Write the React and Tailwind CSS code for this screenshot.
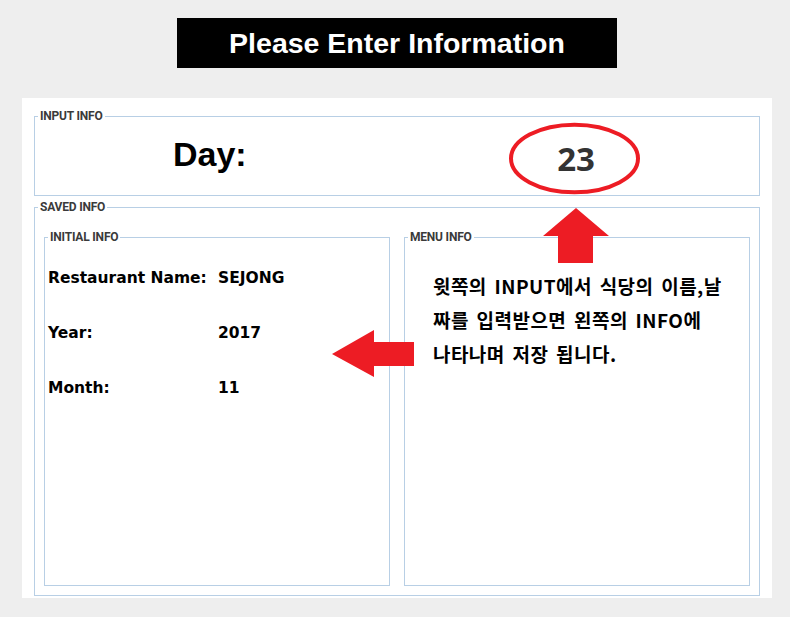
import React from "react";

function Box({ title, className = "", children }) {
  return (
    <fieldset className={`border border-[#b8cfe5] min-w-0 ${className}`}>
      <legend className="ml-[3px] px-[2px] text-[12px] leading-[13px] font-bold tracking-[-0.2px] text-[#3a3a3a] font-['Roboto','Liberation_Sans',Arial,sans-serif]">
        {title}
      </legend>
      {children}
    </fieldset>
  );
}

export default function App() {
  const lbl = "font-['DejaVu_Sans',Verdana,sans-serif] font-bold text-[15.5px] text-black";
  return (
    <div className="relative w-[790px] h-[617px] bg-[#eeeeee] overflow-hidden">
      <div className="pt-[18px] pl-[4px] flex justify-center">
        <div className="w-[440px] h-[50px] bg-black flex items-center justify-center">
          <span className="text-white font-bold text-[28.5px] font-['Liberation_Sans',Arial,sans-serif]">
            Please Enter Information
          </span>
        </div>
      </div>

      <div className="mt-[30px] ml-[22px] w-[750px] h-[500px] bg-white px-[12px] pt-[12px] pb-[2px]">
        <Box title="INPUT INFO">
          <div className="h-[72px] grid grid-cols-2">
            <div className="pl-[138px] pt-[12px]">
              <span className="font-['Liberation_Sans',Arial,sans-serif] font-bold text-[34px] leading-[39px] text-black">
                Day:
              </span>
            </div>
            <div className="pt-[17px] pr-[4px] text-center">
              <span className="font-['Open_Sans',sans-serif] font-bold text-[33px] leading-[37px] text-[#333333]">
                23
              </span>
            </div>
          </div>
        </Box>

        <Box title="SAVED INFO" className="mt-[5px]">
          <div className="flex gap-[14px] px-[9px] pt-[17px] pb-[9px]">
            <Box title="INITIAL INFO" className="flex-1 h-[355px]">
              <div className="pl-[3px] pt-[7px]">
                {[
                  ["Restaurant Name:", "SEJONG"],
                  ["Year:", "2017"],
                  ["Month:", "11"],
                ].map(([k, v]) => (
                  <div key={k} className={`flex h-[55px] leading-[55px] ${lbl}`}>
                    <span className="w-[170px] whitespace-nowrap">{k}</span>
                    <span>{v}</span>
                  </div>
                ))}
              </div>
            </Box>
            <Box title="MENU INFO" className="flex-1 h-[355px]">
              <div className="pl-[28px] pt-[25px] font-['Noto_Sans_CJK_KR','Noto_Sans',sans-serif] font-bold text-[19px] leading-[34px] tracking-[0.45px] [word-spacing:3px] text-black whitespace-nowrap">
                윗쪽의 INPUT에서 식당의 이름,날
                <br />
                짜를 입력받으면 왼쪽의 INFO에
                <br />
                나타나며 저장 됩니다.
              </div>
            </Box>
          </div>
        </Box>
      </div>

      <svg
        className="absolute left-0 top-0 pointer-events-none"
        width="790"
        height="617"
        viewBox="0 0 790 617"
      >
        <ellipse cx="574.5" cy="158.5" rx="63.5" ry="33.8" fill="none" stroke="#ed1c24" strokeWidth="4" />
        <polygon
          points="576,208 609,236 593,236 593,263 558,263 558,236 543,236"
          fill="#ed1c24"
        />
        <polygon
          points="332,354 374,330 374,342 414,342 414,366 374,366 374,377"
          fill="#ed1c24"
        />
      </svg>
    </div>
  );
}
